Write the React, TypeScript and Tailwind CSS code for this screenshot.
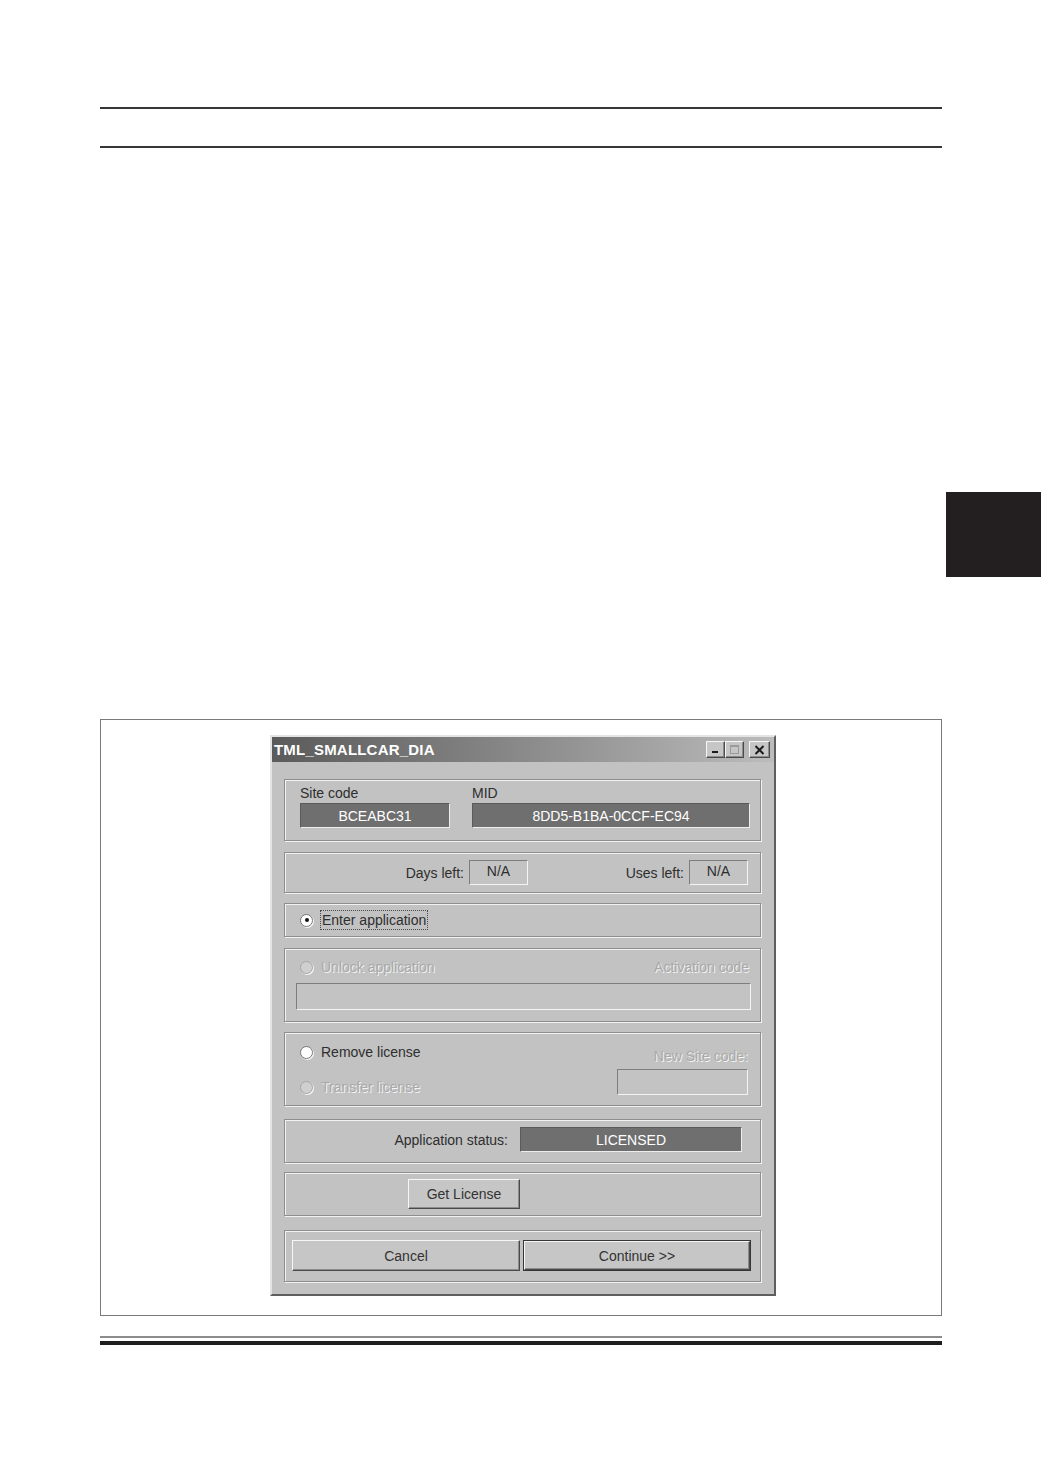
import React from "react";

const etched = "border border-[#8e8e8e] shadow-[inset_1px_1px_0_#f2f2f2,1px_1px_0_#f2f2f2]";
const dimText = "text-[#a9a9a9] [text-shadow:1px_1px_0_#f4f4f4]";
const darkField =
  "flex items-center justify-center border border-t-[#5a5a5a] border-l-[#5a5a5a] border-b-[#eeeeee] border-r-[#eeeeee] bg-[#6f6f6f] text-white";
const sunken =
  "border border-t-[#7e7e7e] border-l-[#7e7e7e] border-b-[#f4f4f4] border-r-[#f4f4f4] bg-[#c3c3c3]";
const raised =
  "flex items-center justify-center border border-t-[#f6f6f6] border-l-[#f6f6f6] border-b-[#4a4a4a] border-r-[#4a4a4a] bg-[#c6c6c6] shadow-[inset_-1px_-1px_0_#8c8c8c] text-[#333]";

function Radio({ checked = false, disabled = false }: { checked?: boolean; disabled?: boolean }) {
  return (
    <span
      className={`inline-flex h-[13px] w-[13px] shrink-0 items-center justify-center rounded-full border shadow-[1px_1px_0_#f5f5f5] ${
        disabled ? "border-[#a6a6a6] bg-[#cfcfcf]" : "border-[#777] bg-white"
      }`}
    >
      {checked && <span className="h-[4px] w-[4px] rounded-full bg-[#111]" />}
    </span>
  );
}

function TitleButton({ children, wide = false }: { children: React.ReactNode; wide?: boolean }) {
  return (
    <div className={`${raised} h-[17px] ${wide ? "w-[21px]" : "w-[19px]"}`}>{children}</div>
  );
}

function LicenseWindow() {
  return (
    <div className="w-[506px] border-2 border-t-[#e4e4e4] border-l-[#e4e4e4] border-r-[#5e5e5e] border-b-[#5e5e5e] bg-[#c2c2c2] text-[14px] leading-[16px] text-[#2e2e2e]">
      {/* title bar */}
      <div className="flex h-[25px] items-center bg-gradient-to-r from-[#5b5b5b] via-[#8a8a8a] to-[#bcbcbc] pl-[2px] pr-[4px]">
        <span className="text-[15px] font-bold tracking-[0.2px] text-white">TML_SMALLCAR_DIA</span>
        <div className="ml-auto flex items-center">
          <TitleButton>
            <svg width="9" height="9" viewBox="0 0 9 9">
              <rect x="1" y="6" width="6" height="2" fill="#1a1a1a" />
            </svg>
          </TitleButton>
          <TitleButton>
            <svg width="11" height="11" viewBox="0 0 11 11">
              <rect x="1.5" y="1.5" width="8" height="8" fill="none" stroke="#9a9a9a" strokeWidth="1" />
              <rect x="1.5" y="1.5" width="8" height="1.5" fill="#9a9a9a" />
            </svg>
          </TitleButton>
          <div className="ml-[5px]">
            <TitleButton wide>
              <svg width="11" height="10" viewBox="0 0 11 10">
                <path d="M1.5 1 L9.5 9 M9.5 1 L1.5 9" stroke="#1a1a1a" strokeWidth="2" />
              </svg>
            </TitleButton>
          </div>
        </div>
      </div>

      {/* body */}
      <div className="flex flex-col pl-[12px] pr-[13px] pb-[12px]">
        {/* site code / MID */}
        <div className={`${etched} mt-[17px] h-[62px] pl-[15px] pt-[5px]`}>
          <div className="flex gap-[22px]">
            <div className="w-[150px]">
              <div className="h-[16px]">Site code</div>
              <div className={`${darkField} mt-[2px] h-[25px]`}>BCEABC31</div>
            </div>
            <div className="w-[278px]">
              <div className="h-[16px]">MID</div>
              <div className={`${darkField} mt-[2px] h-[25px]`}>8DD5-B1BA-0CCF-EC94</div>
            </div>
          </div>
        </div>

        {/* days / uses */}
        <div className={`${etched} mt-[11px] flex h-[41px] items-start pr-[12px] pt-[7px]`}>
          <div className="flex flex-1 items-center justify-end">
            <span>Days left:</span>
            <div className={`${sunken} ml-[5px] flex h-[25px] w-[59px] justify-center pt-[2px]`}>N/A</div>
          </div>
          <div className="flex w-[220px] items-center justify-end">
            <span>Uses left:</span>
            <div className={`${sunken} ml-[5px] flex h-[25px] w-[59px] justify-center pt-[2px]`}>N/A</div>
          </div>
        </div>

        {/* enter application */}
        <div className={`${etched} mt-[10px] flex h-[34px] items-center pl-[15px]`}>
          <Radio checked />
          <span className="ml-[7px] border border-dotted border-[#4a4a4a] px-[1px] py-[1px]">Enter application</span>
        </div>

        {/* unlock application */}
        <div className={`${etched} mt-[11px] h-[74px] pl-[11px] pr-[9px] pt-[10px]`}>
          <div className="flex h-[16px] items-center pl-[4px] pr-[2px]">
            <Radio disabled />
            <span className={`${dimText} ml-[8px]`}>Unlock application</span>
            <span className={`${dimText} ml-auto`}>Activation code</span>
          </div>
          <div className={`${sunken} mt-[8px] h-[27px]`} />
        </div>

        {/* remove / transfer */}
        <div className={`${etched} mt-[10px] flex h-[74px] pl-[15px] pr-[12px]`}>
          <div className="flex flex-col gap-[19px] pt-[11px]">
            <div className="flex h-[16px] items-center">
              <Radio />
              <span className="ml-[8px]">Remove license</span>
            </div>
            <div className="flex h-[16px] items-center">
              <Radio disabled />
              <span className={`${dimText} ml-[8px]`}>Transfer license</span>
            </div>
          </div>
          <div className="ml-auto flex flex-col items-end pt-[15px]">
            <span className={dimText}>New Site code:</span>
            <div className={`${sunken} mt-[5px] h-[26px] w-[131px]`} />
          </div>
        </div>

        {/* status */}
        <div className={`${etched} mt-[13px] flex h-[44px] items-start justify-end pr-[18px] pt-[7px]`}>
          <span className="mt-[5px]">Application status:</span>
          <div className={`${darkField} ml-[12px] h-[25px] w-[222px]`}>LICENSED</div>
        </div>

        {/* get license */}
        <div className={`${etched} mt-[9px] h-[44px] pl-[123px] pt-[6px]`}>
          <div className={`${raised} h-[30px] w-[112px]`}>Get License</div>
        </div>

        {/* cancel / continue */}
        <div className={`${etched} mt-[14px] flex h-[52px] gap-[3px] pl-[7px] pt-[9px]`}>
          <div className={`${raised} h-[31px] w-[228px]`}>Cancel</div>
          <div className="h-[31px] w-[228px] border border-[#353535]">
            <div className={`${raised} h-full w-full`}>Continue &gt;&gt;</div>
          </div>
        </div>
      </div>
    </div>
  );
}

export default function App() {
  return (
    <div className="flex h-[1472px] w-[1041px] flex-col bg-white pt-[107px] font-['Liberation_Sans',Arial,sans-serif]">
      <div className="ml-[100px] h-[2px] w-[842px] bg-[#363636]" />
      <div className="ml-[100px] mt-[37px] h-[2px] w-[842px] bg-[#363636]" />

      <div className="mt-[344px] h-[85px] w-[95px] self-end bg-[#231f20]" />

      <div className="ml-[100px] mt-[142px] h-[597px] w-[842px] border border-[#7a7a7a] pl-[169px] pt-[15px]">
        <LicenseWindow />
      </div>

      <div className="ml-[100px] mt-[20px] h-[2px] w-[842px] bg-[#8c8c8c]" />
      <div className="ml-[100px] mt-[3px] h-[4px] w-[842px] bg-[#1e1e1e]" />
    </div>
  );
}
